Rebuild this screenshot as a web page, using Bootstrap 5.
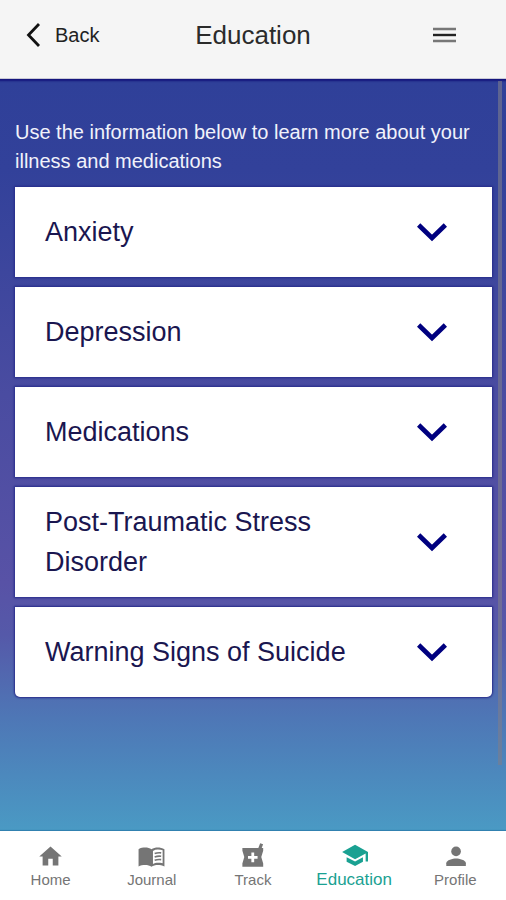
<!DOCTYPE html>
<html lang="en">
<head>
<meta charset="utf-8">
<meta name="viewport" content="width=device-width, initial-scale=1">
<title>Education</title>
<link href="https://cdn.jsdelivr.net/npm/bootstrap@5.3.0/dist/css/bootstrap.min.css" rel="stylesheet">
<style>
  body { font-family: "Liberation Sans", Arial, sans-serif; background: #fff; }
  .top-bar { height: 79px; padding: 0 24px 8px; background: #f5f5f5; border-bottom: 1px solid #c9c9d6; }
  .top-bar > * { flex: 1 1 0; }
  .top-bar .btn { color: #222; font-size: 20px; line-height: 28px; }
  .top-bar .menu-btn { margin-right: 26px; }
  .top-bar h1 { font-size: 26px; line-height: 32px; color: #2b2b2b; }
  .content-area {
    padding: 39px 14px 38px 15px;
    background: linear-gradient(180deg, #2f4099 0%, #32419a 12%, #4a4ca1 42%, #5852a6 67%, #5559a9 74%, #4e77b6 85%, #4a9ac4 100%);
    box-shadow: inset 0 4px 2px -2px #14147c, inset 0 -3px 1px -2px #2f7fae;
  }
  .intro { font-size: 20px; line-height: 29px; margin-bottom: 11px; color: #f1f2fb; }
  .topics { gap: 10px; }
  .topic { min-height: 90px; padding: 15px 45px 15px 30px; background: #fff; box-shadow: 0 0 2px 1px #262b8a; color: #1a1650; font-size: 27px; line-height: 40px; }
  .topics li:last-child .topic { border-radius: 0 0 5px 5px; }
  .topic:hover { color: #00007f; }
  .scroll-thumb { right: 4px; top: 2px; bottom: 66px; width: 4px; background: rgba(125, 125, 140, .6); }
  .tab-bar { min-height: 69px; padding-top: 12px; }
  .tab-link { color: #757575; font-size: 15px; line-height: 19px; }
  .tab-link.active { color: #1aa192; font-size: 17px; }
  .tab-link svg { height: 27px; width: 27px; }
</style>
</head>
<body class="d-flex flex-column min-vh-100">
<header class="top-bar d-flex align-items-center">
  <div>
    <button type="button" class="btn border-0 p-0 d-flex align-items-center">
      <svg class="me-2" width="23" height="26" viewBox="0 0 23 26" fill="none" stroke="#111" stroke-width="2.8" aria-hidden="true"><path d="M15 2 4.500 13 15 24"/></svg>
      Back
    </button>
  </div>
  <h1 class="m-0 fw-normal text-center">Education</h1>
  <div class="d-flex justify-content-end">
    <button type="button" class="menu-btn btn border-0 p-0" aria-label="Menu">
      <svg class="d-block" width="23" height="18" viewBox="0 0 23 18" aria-hidden="true"><path d="M0 1.700h23v2.600H0zM0 13.700h23v2.600H0z" fill="#777"/><path d="M0 7.800h23v2.400H0z" fill="#222"/></svg>
    </button>
  </div>
</header>

<main class="content-area flex-grow-1 position-relative">
  <p class="intro">Use the information below to learn more about your illness and medications</p>
  <ul class="topics list-unstyled d-flex flex-column mb-0">
    <li><button type="button" class="topic btn border-0 rounded-0 w-100 d-flex align-items-center justify-content-between gap-3 text-start">Anxiety <svg class="flex-shrink-0" width="30" height="20" viewBox="0 0 30 20" fill="none" stroke="#00007f" stroke-width="4.800" aria-hidden="true"><path d="M1.600 3 15 16 28.400 3"/></svg></button></li>
    <li><button type="button" class="topic btn border-0 rounded-0 w-100 d-flex align-items-center justify-content-between gap-3 text-start">Depression <svg class="flex-shrink-0" width="30" height="20" viewBox="0 0 30 20" fill="none" stroke="#00007f" stroke-width="4.800" aria-hidden="true"><path d="M1.600 3 15 16 28.400 3"/></svg></button></li>
    <li><button type="button" class="topic btn border-0 rounded-0 w-100 d-flex align-items-center justify-content-between gap-3 text-start">Medications <svg class="flex-shrink-0" width="30" height="20" viewBox="0 0 30 20" fill="none" stroke="#00007f" stroke-width="4.800" aria-hidden="true"><path d="M1.600 3 15 16 28.400 3"/></svg></button></li>
    <li><button type="button" class="topic btn border-0 rounded-0 w-100 d-flex align-items-center justify-content-between gap-3 text-start">Post-Traumatic Stress Disorder <svg class="flex-shrink-0" width="30" height="20" viewBox="0 0 30 20" fill="none" stroke="#00007f" stroke-width="4.800" aria-hidden="true"><path d="M1.600 3 15 16 28.400 3"/></svg></button></li>
    <li><button type="button" class="topic btn border-0 w-100 d-flex align-items-center justify-content-between gap-3 text-start">Warning Signs of Suicide <svg class="flex-shrink-0" width="30" height="20" viewBox="0 0 30 20" fill="none" stroke="#00007f" stroke-width="4.800" aria-hidden="true"><path d="M1.600 3 15 16 28.400 3"/></svg></button></li>
  </ul>
  <div class="scroll-thumb position-absolute" aria-hidden="true"></div>
</main>

<nav class="tab-bar row row-cols-5 g-0 bg-white text-center" aria-label="Main">
  <a href="#home" class="tab-link col text-decoration-none d-flex flex-column align-items-center">
    <svg viewBox="0 0 24 24" fill="currentColor" aria-hidden="true"><path d="M10 20v-6h4v6h5v-8h3L12 3 2 12h3v8z"/></svg>
    Home
  </a>
  <a href="#journal" class="tab-link col text-decoration-none d-flex flex-column align-items-center">
    <svg viewBox="0 0 24 24" fill="currentColor" aria-hidden="true"><path fill-rule="evenodd" d="M12 5.500C10.500 4.400 8.500 4 6.500 4S2.200 4.300.5 5.500v15.300C2 19.900 4.500 19.500 6.500 19.500s4 .4 5.500 1.500c1.500-1.100 3.500-1.500 5.500-1.500s4 .3 6 1.300V5.500C21.800 4.400 19.500 4 17.500 4s-4 .4-5.500 1.500zM13.300 7c1.300-.8 2.800-1.200 4.400-1.200 1.500 0 3 .2 4.200.7v11.600c-1.400-.4-2.800-.5-4.200-.5-1.600 0-3.200.4-4.400 1.100z"/><path fill="none" stroke="currentColor" stroke-width="1.500" d="M14.800 9.400c1.900-.7 3.800-.9 5.800-.6M14.800 12.400c1.900-.7 3.800-.9 5.800-.6M14.800 15.400c1.900-.7 3.800-.9 5.800-.6"/></svg>
    Journal
  </a>
  <a href="#track" class="tab-link col text-decoration-none d-flex flex-column align-items-center">
    <svg viewBox="0 0 24 24" fill="currentColor" aria-hidden="true"><path fill-rule="evenodd" d="M21.500 4.500h-1.300l1.200-3.400-2.600-.9-1.600 4.300H3v2.300l1.700 5.700L3 18.200V21h18.500v-2.800l-1.700-5.700 1.700-5.700zM16.500 14h-3v3h-2.500v-3H8v-2.500h3v-3h2.500v3h3z"/></svg>
    Track
  </a>
  <a href="#education" class="tab-link active col text-decoration-none d-flex flex-column align-items-center" aria-current="page">
    <svg viewBox="0 0 24 24" fill="currentColor" aria-hidden="true"><path d="M5 12.700v4l7.500 3.800 7-3.800v-4l-7 3.800zM12.500 1.500 1 8l11.500 6.500 9.400-5.100v7.100H24V8z"/></svg>
    Education
  </a>
  <a href="#profile" class="tab-link col text-decoration-none d-flex flex-column align-items-center">
    <svg viewBox="0 0 24 24" fill="currentColor" aria-hidden="true"><circle cx="12.500" cy="7.500" r="4.300"/><path d="M12.500 13.800c-2.900 0-8.700 1.400-8.700 4.200v2.500h17.400V18c0-2.800-5.800-4.200-8.700-4.200z"/></svg>
    Profile
  </a>
</nav>
<script src="https://cdn.jsdelivr.net/npm/bootstrap@5.3.0/dist/js/bootstrap.bundle.min.js"></script>
</body>
</html>
